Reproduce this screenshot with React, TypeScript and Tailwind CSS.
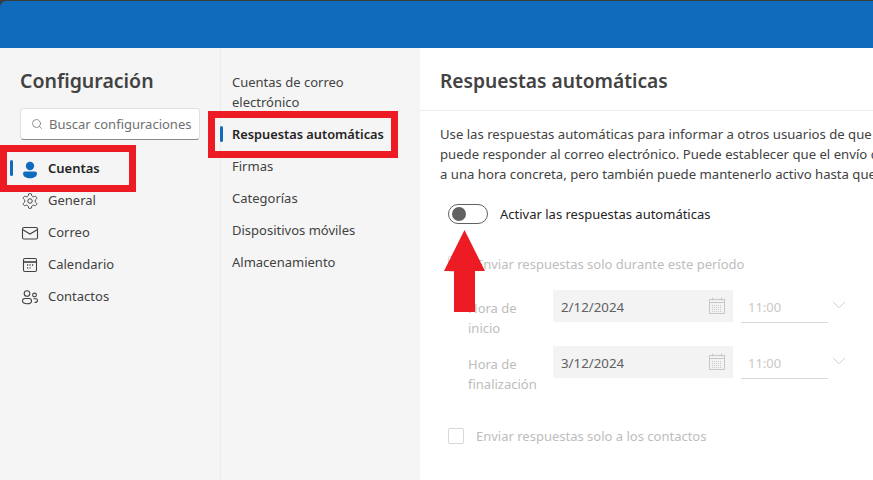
import { ChevronDown, Search } from "lucide-react";

const LEFT_NAV = ["General", "Correo", "Calendario", "Contactos"];
const MID_NAV = ["Firmas", "Categorías", "Dispositivos móviles", "Almacenamiento"];

function NavIcon({ name }: { name: string }) {
  if (name === "General") {
    return (
      <svg width="18" height="18" viewBox="0 0 24 24" fill="none" stroke="#424242" strokeWidth="1.3" strokeLinejoin="round">
        <path d="M12.22 2h-.44a2 2 0 0 0-2 2v.18a2 2 0 0 1-1 1.73l-.43.25a2 2 0 0 1-2 0l-.15-.08a2 2 0 0 0-2.73.73l-.22.38a2 2 0 0 0 .73 2.73l.15.1a2 2 0 0 1 1 1.72v.51a2 2 0 0 1-1 1.74l-.15.09a2 2 0 0 0-.73 2.73l.22.38a2 2 0 0 0 2.73.73l.15-.08a2 2 0 0 1 2 0l.43.25a2 2 0 0 1 1 1.73V20a2 2 0 0 0 2 2h.44a2 2 0 0 0 2-2v-.18a2 2 0 0 1 1-1.73l.43-.25a2 2 0 0 1 2 0l.15.08a2 2 0 0 0 2.73-.73l.22-.39a2 2 0 0 0-.73-2.73l-.15-.08a2 2 0 0 1-1-1.74v-.5a2 2 0 0 1 1-1.74l.15-.09a2 2 0 0 0 .73-2.73l-.22-.38a2 2 0 0 0-2.73-.73l-.15.08a2 2 0 0 1-2 0l-.43-.25a2 2 0 0 1-1-1.73V4a2 2 0 0 0-2-2z" />
        <circle cx="12" cy="12" r="3" />
      </svg>
    );
  }
  if (name === "Correo") {
    return (
      <svg width="18" height="18" viewBox="0 0 18 18" fill="none" stroke="#424242" strokeWidth="1.1">
        <rect x="1.5" y="3.5" width="15" height="11.5" rx="1.5" />
        <path d="M1.5 5.5 9 10l7.5-4.5" />
      </svg>
    );
  }
  if (name === "Calendario") {
    return (
      <svg width="18" height="18" viewBox="0 0 18 18" fill="none" stroke="#424242" strokeWidth="1.1">
        <rect x="2.5" y="2.5" width="13" height="13" rx="1.5" />
        <path d="M2.5 6h13" strokeWidth="1.6" />
        <path d="M6 9h1.2M8.5 9h1.2M11 9h1.2M6 11.8h1.2M8.5 11.8h1.2" strokeWidth="1.3" />
      </svg>
    );
  }
  return (
    <svg width="18" height="18" viewBox="0 0 18 18" fill="none" stroke="#424242" strokeWidth="1.1">
      <circle cx="6" cy="5.5" r="2.8" />
      <circle cx="13.5" cy="7" r="1.9" />
      <path d="M1.5 13c0-1.6.9-2.5 2.2-2.5h4.6c1.3 0 2.2.9 2.2 2.5 0 1.8-2 2.8-4.5 2.8S1.5 14.8 1.5 13z" />
      <path d="M12.5 10.8h2.3c1 0 1.700.7 1.700 1.700 0 1.300-1.200 2-3 2" />
    </svg>
  );
}

function DateIcon() {
  return (
    <svg width="16" height="18" viewBox="0 0 16 18" fill="none" stroke="#c8c8c8" strokeWidth="1">
      <rect x="0.5" y="2.5" width="15" height="14" />
      <path d="M0.5 5.5h15M3.5 0.5v3M12.5 0.5v3" />
      <path d="M3 8.5h10M3 10.5h10M3 12.5h10M3 14.5h10" strokeDasharray="1 1" />
    </svg>
  );
}

function DateRow({ label, tail, date }: { label: string; tail: string; date: string }) {
  return (
    <div className="flex h-[56px] items-start">
      <div className="w-[133px] shrink-0 pt-[8px] pl-[48px] leading-[20px] text-[#bdbdbd]">
        <div>{label}</div>
        <div>{tail}</div>
      </div>
      <div className="flex h-[32px] w-[180px] shrink-0 items-center justify-between bg-[#f3f3f3] px-[8px] text-[#616161]">
        <span className="pt-[3px] text-[13.3px]">{date}</span>
        <DateIcon />
      </div>
      <div className="ml-[8px] flex h-[33px] w-[87px] shrink-0 items-center border-b border-[#d8d8d8] pt-[3px] pl-[7px] text-[#c8c8c8]">
        11:00
      </div>
      <ChevronDown size={22} strokeWidth={1} className="mt-[4px] ml-[0px] text-[#c8c8c8]" />
    </div>
  );
}

export default function App() {
  return (
    <div className="relative flex h-[480px] w-[873px] flex-col overflow-hidden bg-[#3b3b3b] font-['Noto_Sans',sans-serif] text-[13px] text-[#424242]">
      <div className="mt-[1px] h-[47px] shrink-0 rounded-tl-[6px] bg-[#0f6cbd]" />
      <div className="flex min-h-0 flex-1 bg-white">
        {/* primer panel */}
        <div className="w-[220px] shrink-0 bg-[#f5f5f5] pt-[19px]">
          <h2 className="pl-[20px] text-[19.5px] leading-[28px] font-semibold text-[#424242]">Configuración</h2>
          <div className="mt-[13px] ml-[20px] flex h-[32px] w-[180px] items-center rounded-[4px] border border-[#e0e0e0] border-b-[#8a8a8a] bg-white pl-[10px] whitespace-nowrap text-[#707070]">
            <Search size={12} strokeWidth={1.5} className="mr-[6px] shrink-0" />
            <span className="pt-[2px]">Buscar configuraciones</span>
          </div>
          <div className="mt-[12px] flex h-[32px] items-center">
            <span className="ml-[10px] h-[16px] w-[3px] rounded-full bg-[#0f6cbd]" />
            <svg width="18" height="18" viewBox="0 0 18 18" className="mt-[4px] mr-[9px] ml-[8px]" fill="#0f6cbd">
              <circle cx="9" cy="5" r="4.2" />
              <path d="M2 12.5c0-1.2 1-2 2-2h10c1 0 2 .8 2 2 0 3.2-3.2 4.8-7 4.8s-7-1.6-7-4.8z" />
            </svg>
            <span className="pt-[2px] font-semibold text-[#242424]">Cuentas</span>
          </div>
          {LEFT_NAV.map((item) => (
            <div key={item} className="flex h-[32px] items-center pt-[2px] pl-[21px]">
              <NavIcon name={item} />
              <span className="ml-[9px]">{item}</span>
            </div>
          ))}
        </div>

        {/* segundo panel */}
        <div className="w-[200px] shrink-0 border-l border-[#ececec] bg-[#f5f5f5] pt-[24px]">
          <div className="pl-[11px] leading-[20px]">
            Cuentas de correo
            <br />
            electrónico
          </div>
          <div className="mt-[6px] flex h-[32px] items-center">
            <span className="-ml-[1px] h-[16px] w-[3px] rounded-full bg-[#0f6cbd]" />
            <span className="ml-[9px] pt-[2px] text-[12.8px] font-semibold whitespace-nowrap text-[#242424]">Respuestas automáticas</span>
          </div>
          {MID_NAV.map((item) => (
            <div key={item} className="flex h-[32px] items-center pt-[2px] pl-[11px]">
              {item}
            </div>
          ))}
        </div>

        {/* contenido */}
        <div className="min-w-0 flex-1 overflow-hidden">
          <div className="h-[63px] border-b border-[#ececec] pt-[19px] pl-[20px] text-[19.2px] leading-[28px] font-semibold">
            Respuestas automáticas
          </div>
          <div className="mt-[13px] pl-[20px] text-[13.15px] leading-[20px] whitespace-nowrap">
            <p>Use las respuestas automáticas para informar a otros usuarios de que está de vacaciones o no</p>
            <p>puede responder al correo electrónico. Puede establecer que el envío de respuestas comience</p>
            <p>a una hora concreta, pero también puede mantenerlo activo hasta que lo desactive usted.</p>
          </div>
          <div className="mt-[20px] flex h-[20px] items-center pl-[28px]">
            <span className="flex h-[20px] w-[40px] items-center rounded-full border border-[#616161] bg-white pl-[3px]">
              <span className="h-[14px] w-[14px] rounded-full bg-[#616161]" />
            </span>
            <span className="ml-[12px] pt-[2px] text-[#242424]">Activar las respuestas automáticas</span>
          </div>
          <div className="mt-[22px] flex h-[36px] items-center pl-[28px] text-[#bdbdbd]">
            <span className="h-[16px] w-[16px] rounded-[2px] border border-[#d8d8d8]" />
            <span className="ml-[12px] pt-[2px]">Enviar respuestas solo durante este período</span>
          </div>
          <div className="mt-[8px]">
            <DateRow label="Hora de" tail="inicio" date="2/12/2024" />
            <DateRow label="Hora de" tail="finalización" date="3/12/2024" />
          </div>
          <div className="mt-[22px] flex h-[24px] items-center pl-[28px] text-[#bdbdbd]">
            <span className="h-[16px] w-[16px] rounded-[2px] border border-[#d8d8d8]" />
            <span className="ml-[12px] pt-[2px]">Enviar respuestas solo a los contactos</span>
          </div>
        </div>
      </div>

      {/* anotaciones sobre la captura */}
      <div className="absolute top-[145px] left-0 h-[47px] w-[136px] border-[7px] border-[#ed1c24]" />
      <div className="absolute top-[111px] left-[208px] h-[47px] w-[190px] border-[7px] border-[#ed1c24]" />
      <svg className="absolute top-[230px] left-[444px]" width="41" height="82" viewBox="0 0 41 82">
        <path d="M20.5 0 41 41H31V82H10V41H0z" fill="#ed1c24" />
      </svg>
    </div>
  );
}
